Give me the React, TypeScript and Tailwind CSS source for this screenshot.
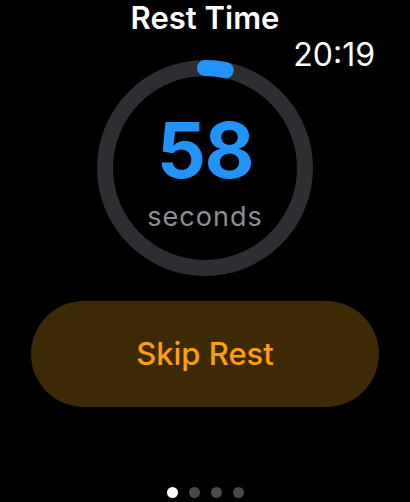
import React from 'react';

const RING_SIZE = 216;
const STROKE = 16;
const RADIUS = (RING_SIZE - STROKE) / 2;
const CIRC = 2 * Math.PI * RADIUS;

export default function App() {
  const total = 60;
  const remaining = 58;
  const elapsed = (total - remaining) / total;

  return (
    <div
      className="relative w-[410px] h-[502px] bg-black flex flex-col items-center overflow-hidden"
      style={{ fontFamily: 'Inter, "Noto Sans", sans-serif' }}
    >
      {/* Title */}
      <h1 className="text-white text-[31px] font-semibold leading-[34px] mt-[1px]">Rest Time</h1>

      {/* Clock */}
      <div className="absolute right-[35px] top-[36px] text-white text-[32px] leading-[38px] font-normal">
        20:19
      </div>

      {/* Ring */}
      <div className="grid mt-[25px] w-[216px] h-[216px]">
        <svg
          className="col-start-1 row-start-1"
          width={RING_SIZE}
          height={RING_SIZE}
          viewBox={`0 0 ${RING_SIZE} ${RING_SIZE}`}
        >
          <circle
            cx={RING_SIZE / 2}
            cy={RING_SIZE / 2}
            r={RADIUS}
            fill="none"
            stroke="#2d2e32"
            strokeWidth={STROKE}
          />
          <circle
            cx={RING_SIZE / 2}
            cy={RING_SIZE / 2}
            r={RADIUS}
            fill="none"
            stroke="#2094fa"
            strokeWidth={STROKE}
            strokeLinecap="round"
            strokeDasharray={`${CIRC * elapsed} ${CIRC}`}
            transform={`rotate(-90 ${RING_SIZE / 2} ${RING_SIZE / 2})`}
          />
        </svg>
        <div className="col-start-1 row-start-1 flex flex-col items-center pt-[51px]">
          <span className="text-[#2094fa] text-[77px] font-bold leading-[78px] tracking-[-1.5px]">58</span>
          <span className="text-[#8e8e93] text-[27px] leading-[30px] tracking-[1px] mt-[13px]">seconds</span>
        </div>
      </div>

      {/* Skip button */}
      <button className="mt-[25px] w-[348px] h-[106px] rounded-full bg-[#3d2903] text-[#ff9f0a] text-[31px] font-medium">
        Skip Rest
      </button>

      {/* Page dots */}
      <div className="mt-auto mb-[4px] flex gap-[11px]">
        <span className="w-[11px] h-[11px] rounded-full bg-white" />
        <span className="w-[11px] h-[11px] rounded-full bg-[#4a4a4a]" />
        <span className="w-[11px] h-[11px] rounded-full bg-[#4a4a4a]" />
        <span className="w-[11px] h-[11px] rounded-full bg-[#4a4a4a]" />
      </div>
    </div>
  );
}
